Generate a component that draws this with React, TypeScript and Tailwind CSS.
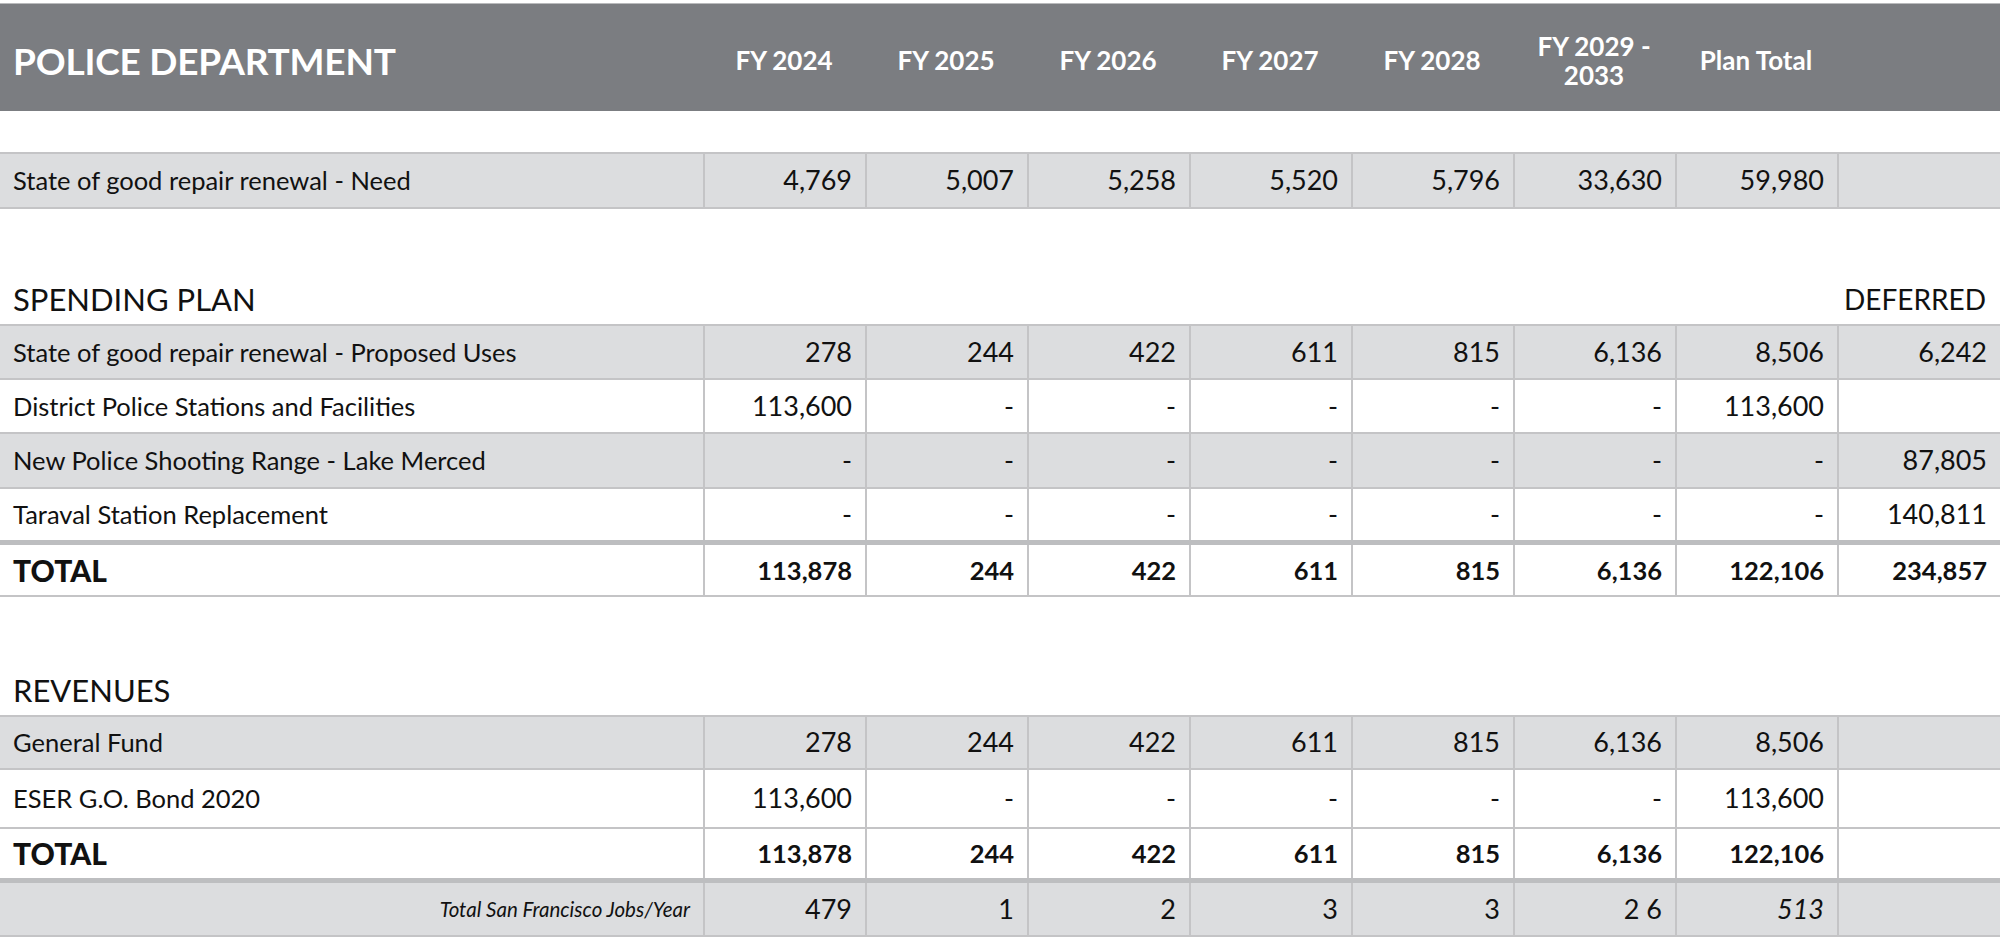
import React from "react";

type RowProps = {
  label: React.ReactNode;
  values: string[];
  deferred?: string;
  shaded?: boolean;
  bold?: boolean;
  h: string;
  labelClass?: string;
  valueClass?: string[];
};

const GRID = "grid grid-cols-[703px_repeat(7,162px)_1fr]";

function Row({ label, values, deferred = "", shaded, bold, h, labelClass, valueClass }: RowProps) {
  return (
    <div className={`${GRID} ${h} ${shaded ? "bg-[#dcdddf]" : "bg-white"}`}>
      <div
        className={`flex items-center px-[13px] ${
          labelClass ?? (bold ? "text-[30px] font-black" : "text-[25.5px]")
        }`}
      >
        {label}
      </div>
      {[...values, deferred].map((v, i) => (
        <div
          key={i}
          className={`flex items-center justify-end border-l-2 border-[#c4c4c6] pr-[13px] ${
            bold ? "text-[25.5px] font-bold" : "text-[27px]"
          } ${valueClass?.[i] ?? ""}`}
        >
          {v}
        </div>
      ))}
    </div>
  );
}

function Line({ thick }: { thick?: boolean }) {
  return <div className={thick ? "h-[5px] bg-[#bdbec0]" : "h-[2px] bg-[#c4c4c6]"} />;
}

function SectionTitle({ title, right, h }: { title: string; right?: string; h: string }) {
  return (
    <div className={`flex ${h} items-end justify-between px-[13px] pb-[7px] leading-[36px]`}>
      <span className="text-[31px]">{title}</span>
      {right && <span className="pr-[1px] text-[28px]">{right}</span>}
    </div>
  );
}

const years = ["FY 2024", "FY 2025", "FY 2026", "FY 2027", "FY 2028"];

export default function App() {
  return (
    <div className="w-[2000px] h-[937px] overflow-hidden bg-white pt-[3px] font-['Lato',sans-serif] text-[#111]">
      {/* header band */}
      <div className={`${GRID} h-[108px] border-t border-[#b9babc] bg-[#7b7d81] pt-[6px] text-white`}>
        <div className="flex items-center px-[13px] text-[37px] font-bold tracking-[-0.2px]">
          POLICE DEPARTMENT
        </div>
        {years.map((y) => (
          <div key={y} className="flex items-center justify-center text-[26px] font-bold">
            {y}
          </div>
        ))}
        <div className="flex items-center justify-center text-center text-[26px] font-bold leading-[29px]">
          FY 2029 -
          <br />
          2033
        </div>
        <div className="flex items-center justify-center text-[26px] font-bold">Plan Total</div>
        <div />
      </div>

      <div className="h-[41px]" />
      <Line />
      <Row
        shaded
        h="h-[53px]"
        label="State of good repair renewal - Need"
        values={["4,769", "5,007", "5,258", "5,520", "5,796", "33,630", "59,980"]}
      />
      <Line />

      <SectionTitle title="SPENDING PLAN" right="DEFERRED" h="h-[115px]" />
      <Line />
      <Row
        shaded
        h="h-[52px]"
        label="State of good repair renewal - Proposed Uses"
        values={["278", "244", "422", "611", "815", "6,136", "8,506"]}
        deferred="6,242"
      />
      <Line />
      <Row
        h="h-[52px]"
        label="District Police Stations and Facilities"
        values={["113,600", "-", "-", "-", "-", "-", "113,600"]}
      />
      <Line />
      <Row
        shaded
        h="h-[53px]"
        label="New Police Shooting Range - Lake Merced"
        values={["-", "-", "-", "-", "-", "-", "-"]}
        deferred="87,805"
      />
      <Line />
      <Row
        h="h-[51px]"
        label="Taraval Station Replacement"
        values={["-", "-", "-", "-", "-", "-", "-"]}
        deferred="140,811"
      />
      <Line thick />
      <Row
        bold
        h="h-[50px]"
        label="TOTAL"
        values={["113,878", "244", "422", "611", "815", "6,136", "122,106"]}
        deferred="234,857"
      />
      <Line />

      <SectionTitle title="REVENUES" h="h-[118px]" />
      <Line />
      <Row
        shaded
        h="h-[51px]"
        label="General Fund"
        values={["278", "244", "422", "611", "815", "6,136", "8,506"]}
      />
      <Line />
      <Row
        h="h-[57px]"
        label="ESER G.O. Bond 2020"
        values={["113,600", "-", "-", "-", "-", "-", "113,600"]}
      />
      <Line />
      <Row
        bold
        h="h-[49px]"
        label="TOTAL"
        values={["113,878", "244", "422", "611", "815", "6,136", "122,106"]}
      />
      <Line thick />
      <Row
        shaded
        h="h-[52px]"
        label={<span className="ml-auto">Total San Francisco Jobs/Year</span>}
        labelClass="text-[20.5px] italic"
        values={["479", "1", "2", "3", "3", "2 6", "513"]}
        valueClass={["", "", "", "", "", "", "italic"]}
      />
      <Line />
    </div>
  );
}
